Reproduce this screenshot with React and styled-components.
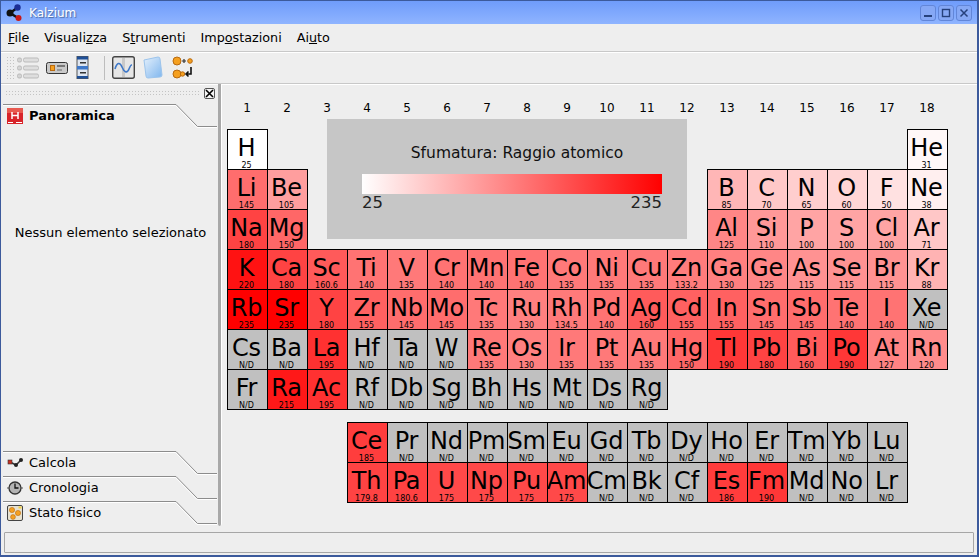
import styled, { createGlobalStyle } from 'styled-components';

const GlobalStyle = createGlobalStyle`
  html, body {
    margin: 0;
    padding: 0;
    background: #eeeeee;
  }
`;

const ND = 'N/D';
const MIN = 25;
const MAX = 235;

const cellColor = (value) => {
  if (value === ND) return '#c0c0c0';
  const c = Math.round((255 * (MAX - parseFloat(value))) / (MAX - MIN));
  return `rgb(255, ${c}, ${c})`;
};

// [symbol, value, column, row]
const row = (r, start, list) =>
  list.map(([s, v], i) => [s, v, start + i, r]);

const elements = [
  ...row(1, 1, [['H', '25']]),
  ...row(1, 18, [['He', '31']]),
  ...row(2, 1, [['Li', '145'], ['Be', '105']]),
  ...row(2, 13, [['B', '85'], ['C', '70'], ['N', '65'], ['O', '60'], ['F', '50'], ['Ne', '38']]),
  ...row(3, 1, [['Na', '180'], ['Mg', '150']]),
  ...row(3, 13, [['Al', '125'], ['Si', '110'], ['P', '100'], ['S', '100'], ['Cl', '100'], ['Ar', '71']]),
  ...row(4, 1, [['K', '220'], ['Ca', '180'], ['Sc', '160.6'], ['Ti', '140'], ['V', '135'], ['Cr', '140'], ['Mn', '140'], ['Fe', '140'], ['Co', '135'], ['Ni', '135'], ['Cu', '135'], ['Zn', '133.2'], ['Ga', '130'], ['Ge', '125'], ['As', '115'], ['Se', '115'], ['Br', '115'], ['Kr', '88']]),
  ...row(5, 1, [['Rb', '235'], ['Sr', '235'], ['Y', '180'], ['Zr', '155'], ['Nb', '145'], ['Mo', '145'], ['Tc', '135'], ['Ru', '130'], ['Rh', '134.5'], ['Pd', '140'], ['Ag', '160'], ['Cd', '155'], ['In', '155'], ['Sn', '145'], ['Sb', '145'], ['Te', '140'], ['I', '140'], ['Xe', ND]]),
  ...row(6, 1, [['Cs', ND], ['Ba', ND], ['La', '195'], ['Hf', ND], ['Ta', ND], ['W', ND], ['Re', '135'], ['Os', '130'], ['Ir', '135'], ['Pt', '135'], ['Au', '135'], ['Hg', '150'], ['Tl', '190'], ['Pb', '180'], ['Bi', '160'], ['Po', '190'], ['At', '127'], ['Rn', '120']]),
  ...row(7, 1, [['Fr', ND], ['Ra', '215'], ['Ac', '195'], ['Rf', ND], ['Db', ND], ['Sg', ND], ['Bh', ND], ['Hs', ND], ['Mt', ND], ['Ds', ND], ['Rg', ND]]),
];

const lanthanides = [
  ...row(1, 1, [['Ce', '185'], ['Pr', ND], ['Nd', ND], ['Pm', ND], ['Sm', ND], ['Eu', ND], ['Gd', ND], ['Tb', ND], ['Dy', ND], ['Ho', ND], ['Er', ND], ['Tm', ND], ['Yb', ND], ['Lu', ND]]),
  ...row(2, 1, [['Th', '179.8'], ['Pa', '180.6'], ['U', '175'], ['Np', '175'], ['Pu', '175'], ['Am', '175'], ['Cm', ND], ['Bk', ND], ['Cf', ND], ['Es', '186'], ['Fm', '190'], ['Md', ND], ['No', ND], ['Lr', ND]]),
];

const Window = styled.div`
  width: 979px;
  height: 557px;
  box-sizing: border-box;
  display: flex;
  flex-direction: column;
  background: #eeeeee;
  border-left: 1px solid #3c5a9c;
  border-right: 2px solid #3c5a9c;
  border-bottom: 2px solid #3c5a9c;
  font-family: "DejaVu Sans", sans-serif;
  color: #000;
  overflow: hidden;
`;

const TitleBar = styled.div`
  height: 24px;
  flex: none;
  display: flex;
  align-items: center;
  padding: 0 7px 0 6px;
  margin: 0 -2px 0 -1px;
  background: linear-gradient(#6f9cfb, #8fb4ff);
  border-top: 1px solid #3c5a9c;
  box-sizing: border-box;
`;

const TitleText = styled.span`
  margin-left: 7px;
  flex: 1;
  font-size: 12px;
  color: #fff;
  text-shadow: 1px 1px 1px #47689f;
`;

const WinButton = styled.div`
  width: 16px;
  height: 16px;
  box-sizing: border-box;
  margin-left: 2px;
  border: 1px solid #6286d8;
  border-radius: 3px;
  background: #86a8f5;
  display: flex;
  align-items: center;
  justify-content: center;
`;

const MenuBar = styled.div`
  height: 28px;
  flex: none;
  box-sizing: border-box;
  display: flex;
  align-items: center;
  gap: 15px;
  padding-left: 7px;
  font-size: 12.75px;
  border-bottom: 1px solid #c8c8c8;
  box-shadow: 0 1px 0 #fff;
  u {
    text-underline-offset: 1px;
  }
`;

const ToolBar = styled.div`
  height: 32px;
  flex: none;
  display: flex;
  align-items: center;
  padding-left: 5px;
  border-bottom: 1px solid #c8c8c8;
  box-sizing: border-box;
  box-shadow: 0 1px 0 #fff;
`;

const Grip = styled.div`
  flex: none;
  background-image: radial-gradient(circle, #c4c4c4 0.8px, transparent 1px);
  background-size: 3px 3px;
`;

const ToolGrip = styled(Grip)`
  width: 8px;
  height: 24px;
  margin-right: 2px;
`;

const ToolIcon = styled.svg`
  flex: none;
  display: block;
  margin-right: ${(p) => p.$gap ?? 8}px;
`;

const ToolSep = styled.div`
  flex: none;
  width: 1px;
  height: 24px;
  background: #bdbdbd;
  margin: 0 7px 0 2px;
`;

const Main = styled.div`
  flex: 1;
  display: flex;
  min-height: 0;
`;

const Sidebar = styled.div`
  width: 217px;
  flex: none;
  display: flex;
  flex-direction: column;
  height: 442px;
  padding-left: 2px;
  box-sizing: border-box;
`;

const DockHead = styled.div`
  height: 20px;
  flex: none;
  display: flex;
  align-items: center;
  padding: 0 3px 2px 2px;
  box-sizing: border-box;
  gap: 3px;
`;

const DockGrip = styled(Grip)`
  flex: 1;
  height: 6px;
`;

const CloseBox = styled.div`
  width: 11px;
  height: 11px;
  box-sizing: border-box;
  border: 1px solid #555;
  border-radius: 2px;
  background: #f4f4f4;
  display: flex;
  align-items: center;
  justify-content: center;
`;

const Tab = styled.div`
  position: relative;
  height: 25px;
  flex: none;
  display: flex;
  align-items: center;
  gap: 6px;
  padding: 0 0 2px 4px;
  font-size: 13px;
  font-weight: ${(p) => (p.$active ? 700 : 400)};
  box-sizing: border-box;
`;

const TabEdge = styled.svg`
  position: absolute;
  left: 0;
  top: 0;
  pointer-events: none;
`;

const Pane = styled.div`
  flex: 1;
  display: flex;
  align-items: flex-start;
  justify-content: center;
  font-size: 13px;
  line-height: 16px;
  padding-top: 96px;
  box-sizing: border-box;
`;

const Splitter = styled.div`
  width: 3px;
  flex: none;
  height: 442px;
  background: #a8a8a8;
  border-right: 1px solid #fff;
  border-radius: 0 0 2px 2px;
`;

const Content = styled.div`
  flex: 1;
  padding: 15px 0 0 5px;
`;

const Table = styled.div`
  display: grid;
  grid-template-columns: repeat(18, 40px);
  grid-template-rows: 20px 10px repeat(7, 40px);
`;

const GroupNumber = styled.div`
  grid-row: 1;
  grid-column: ${(p) => p.$col};
  display: flex;
  align-items: center;
  justify-content: center;
  font-size: 12px;
  padding-bottom: 2px;
`;

const Cell = styled.div`
  width: 41px;
  height: 41px;
  box-sizing: border-box;
  border: 1px solid #000;
  padding-right: 2px;
  display: flex;
  flex-direction: column;
  align-items: center;
  overflow: hidden;
  background: ${(p) => cellColor(p.$value)};
  grid-column: ${(p) => p.$col};
  grid-row: ${(p) => p.$row};
`;

const Symbol = styled.div`
  font-size: 24px;
  line-height: 26px;
  margin-top: 5px;
  height: 26px;
  letter-spacing: -0.2px;
  white-space: nowrap;
`;

const Value = styled.div`
  font-size: 8px;
  line-height: 9px;
`;

const Legend = styled.div`
  grid-column: 3 / 13;
  grid-row: 2 / 6;
  z-index: 1;
  margin: 0 20px;
  height: 120px;
  background: #c6c6c6;
  box-sizing: border-box;
  padding: 26px 0 0 35px;
  display: flex;
  flex-direction: column;
`;

const LegendTitle = styled.div`
  width: 310px;
  font-size: 15.5px;
  line-height: 16px;
  text-align: center;
  margin-bottom: 13px;
  color: #111;
  white-space: nowrap;
`;

const LegendBar = styled.div`
  width: 300px;
  height: 20px;
  background: linear-gradient(to right, #fff, #f00);
`;

const LegendScale = styled.div`
  width: 300px;
  display: flex;
  justify-content: space-between;
  font-size: 16.5px;
  line-height: 18px;
  color: #222;
`;

const InnerTable = styled.div`
  display: grid;
  grid-template-columns: repeat(14, 40px);
  grid-template-rows: repeat(2, 40px);
  margin: 13px 0 0 120px;
`;

const StatusBar = styled.div`
  height: 21px;
  flex: none;
  margin: auto 0 2px 3px;
  width: 970px;
  border: 1px solid #a6a6a6;
  box-sizing: border-box;
  border-radius: 1px;
`;

const TabOutline = () => (
  <TabEdge width="215" height="25" viewBox="0 0 215 25">
    <polyline points="0,0.5 173,0.5 194.5,22.5 214,22.5" fill="none" stroke="#8c8c8c" strokeWidth="1" />
    <polyline points="0,1.5 172.5,1.5 194,23.5 214,23.5" fill="none" stroke="#fff" strokeWidth="1" />
  </TabEdge>
);

const KalziumLogo = () => (
  <svg width="16" height="17" viewBox="0 0 16 17">
    <path d="M4 9 L11 4 M4 9 L12 14" stroke="#111" strokeWidth="2.4" />
    <circle cx="4" cy="9" r="3.5" fill="#111" />
    <circle cx="11.5" cy="3.5" r="3.2" fill="#1c2e96" />
    <circle cx="12.5" cy="14" r="3" fill="#c81818" />
  </svg>
);

const ListIcon = () => (
  <ToolIcon width="23" height="24" viewBox="0 0 23 24" $gap={7}>
    {[2, 10, 18].map((y) => (
      <g key={y}>
        <rect x="1.5" y={y} width="4" height="4" rx="1.5" fill="#d4d4d4" stroke="#bbb" />
        <rect x="7.5" y={y} width="15" height="4" rx="1.5" fill="#dedede" stroke="#bbb" />
      </g>
    ))}
  </ToolIcon>
);

const CardIcon = () => (
  <ToolIcon width="22" height="14" viewBox="0 0 22 14">
    <rect x="0.5" y="1.5" width="21" height="11" rx="2" fill="#c9c9c9" stroke="#333" />
    <rect x="4.5" y="4.5" width="4" height="5" fill="#f5a020" stroke="#b86a10" />
    <rect x="11" y="4" width="8" height="2" fill="#777" />
    <rect x="11" y="8" width="5" height="2" fill="#999" />
  </ToolIcon>
);

const StripIcon = () => (
  <ToolIcon width="14" height="23" viewBox="0 0 14 23" $gap={12}>
    <rect x="1" y="0.5" width="11" height="22" fill="#dfe6f0" stroke="#555" />
    <rect x="1" y="0.5" width="11" height="3" fill="#1f4f96" />
    <rect x="1" y="10" width="11" height="3.5" fill="#3f78c8" />
    <rect x="1" y="20" width="11" height="2.5" fill="#1f4f96" />
    <rect x="4" y="6" width="6" height="1.5" fill="#333" />
    <rect x="4" y="16" width="6" height="1.5" fill="#333" />
  </ToolIcon>
);

const WaveIcon = () => (
  <ToolIcon width="23" height="23" viewBox="0 0 23 23">
    <rect x="0.7" y="0.7" width="21.6" height="21.6" rx="2" fill="#e6e6e6" stroke="#444" strokeWidth="1.4" />
    <rect x="10" y="2" width="3" height="19" fill="#c9c9c9" />
    <path d="M3 13 C5 6 8 6 10 11 S15 18 17 13 S19 9 20 9" fill="none" stroke="#3f78c8" strokeWidth="1.6" />
  </ToolIcon>
);

const GlassIcon = () => (
  <ToolIcon width="20" height="23" viewBox="0 0 20 23" $gap={9}>
    <defs>
      <linearGradient id="glass" x1="0" y1="0" x2="1" y2="1">
        <stop offset="0" stopColor="#e4f0fc" />
        <stop offset="1" stopColor="#7fb6ee" />
      </linearGradient>
    </defs>
    <path d="M1 4 L15 1 Q17 1 17 3 L19 19 Q19 21 17 21 L5 22 Q3 22 3 20 Z" fill="url(#glass)" stroke="#9cc4ec" />
  </ToolIcon>
);

const ReactionIcon = () => (
  <ToolIcon width="23" height="23" viewBox="0 0 23 23">
    <circle cx="5" cy="5" r="4" fill="#f5a020" stroke="#b86a10" />
    <path d="M10 5 H14 M12 3 V7" stroke="#333" strokeWidth="1.2" />
    <circle cx="18" cy="5" r="2.3" fill="#f5a020" stroke="#b86a10" />
    <circle cx="5" cy="18" r="4" fill="#f5a020" stroke="#b86a10" />
    <circle cx="10.5" cy="18" r="2.2" fill="#f5a020" stroke="#b86a10" />
    <path d="M19 11 V18 H14 M16.5 15.5 L14 18 L16.5 20.5" fill="none" stroke="#111" strokeWidth="1.6" />
  </ToolIcon>
);

const ElementIcon = () => (
  <svg width="16" height="16" viewBox="0 0 16 16">
    <rect width="16" height="16" fill="#d8242a" />
    <rect x="0" y="0" width="16" height="5" fill="#e85a50" />
    <path d="M5 4 V11 M11 4 V11 M5 7.5 H11" stroke="#fff" strokeWidth="1.5" />
    <path d="M1 14.5 H6 M9 14.5 H15" stroke="#fff" strokeWidth="1" />
  </svg>
);

const CalcIcon = () => (
  <svg width="16" height="16" viewBox="0 0 16 16">
    <path d="M3 7 L9 10 L14 5" fill="none" stroke="#333" strokeWidth="1.5" />
    <rect x="1" y="5" width="4" height="4" fill="#c83020" stroke="#333" strokeWidth="0.6" />
    <circle cx="9" cy="10" r="2" fill="#222" />
    <circle cx="14" cy="5" r="2" fill="#222" />
  </svg>
);

const ClockIcon = () => (
  <svg width="16" height="16" viewBox="0 0 16 16">
    <circle cx="8" cy="8" r="6" fill="#b4b4b4" stroke="#333" strokeWidth="1.3" />
    <path d="M8 3.5 V8 H11.5" fill="none" stroke="#111" strokeWidth="1.3" />
    <path d="M0 8 H2 M14 8 H16" stroke="#555" />
  </svg>
);

const PhaseIcon = () => (
  <svg width="16" height="16" viewBox="0 0 16 16">
    <rect x="0.5" y="0.5" width="15" height="15" rx="1.5" fill="#e8e2d0" stroke="#444" />
    <circle cx="5" cy="5" r="2.6" fill="#f5a020" stroke="#b86a10" strokeWidth="0.6" />
    <circle cx="11" cy="8" r="2.6" fill="#f5a020" stroke="#b86a10" strokeWidth="0.6" />
    <circle cx="6" cy="12" r="2.4" fill="#f5a020" stroke="#b86a10" strokeWidth="0.6" />
    <rect x="11.5" y="1.5" width="3" height="2" fill="#f4d040" />
  </svg>
);

const Element = ({ symbol, value, col, rowIndex }) => (
  <Cell $value={value} $col={col} $row={rowIndex}>
    <Symbol>{symbol}</Symbol>
    <Value>{value}</Value>
  </Cell>
);

const App = () => {
  return (
    <>
      <GlobalStyle />
      <Window>
        <TitleBar>
          <KalziumLogo />
          <TitleText>Kalzium</TitleText>
          <WinButton>
            <svg width="10" height="10" viewBox="0 0 10 10"><rect x="1" y="7" width="8" height="2" fill="#26417c" /></svg>
          </WinButton>
          <WinButton>
            <svg width="10" height="10" viewBox="0 0 10 10"><rect x="1.5" y="1.5" width="7" height="7" fill="none" stroke="#26417c" strokeWidth="1.4" /></svg>
          </WinButton>
          <WinButton>
            <svg width="10" height="10" viewBox="0 0 10 10"><path d="M1.5 1.5 L8.5 8.5 M8.5 1.5 L1.5 8.5" stroke="#26417c" strokeWidth="1.5" /></svg>
          </WinButton>
        </TitleBar>
        <MenuBar>
          <span><u>F</u>ile</span>
          <span>Visuali<u>z</u>za</span>
          <span>S<u>t</u>rumenti</span>
          <span>Imp<u>o</u>stazioni</span>
          <span>Ai<u>u</u>to</span>
        </MenuBar>
        <ToolBar>
          <ToolGrip />
          <ListIcon />
          <CardIcon />
          <StripIcon />
          <ToolSep />
          <WaveIcon />
          <GlassIcon />
          <ReactionIcon />
        </ToolBar>
        <Main>
          <Sidebar>
            <DockHead>
              <DockGrip />
              <CloseBox>
                <svg width="9" height="9" viewBox="0 0 9 9"><path d="M1 1 L8 8 M8 1 L1 8" stroke="#000" strokeWidth="1.6" /></svg>
              </CloseBox>
            </DockHead>
            <Tab $active>
              <TabOutline />
              <ElementIcon />
              Panoramica
            </Tab>
            <Pane>Nessun elemento selezionato</Pane>
            <Tab>
              <TabOutline />
              <CalcIcon />
              Calcola
            </Tab>
            <Tab>
              <TabOutline />
              <ClockIcon />
              Cronologia
            </Tab>
            <Tab>
              <TabOutline />
              <PhaseIcon />
              Stato fisico
            </Tab>
          </Sidebar>
          <Splitter />
          <Content>
            <Table>
              {Array.from({ length: 18 }, (_, i) => (
                <GroupNumber key={i} $col={i + 1}>{i + 1}</GroupNumber>
              ))}
              <Legend>
                <LegendTitle>Sfumatura: Raggio atomico</LegendTitle>
                <LegendBar />
                <LegendScale>
                  <span>25</span>
                  <span>235</span>
                </LegendScale>
              </Legend>
              {elements.map(([s, v, c, r]) => (
                <Element key={s} symbol={s} value={v} col={c} rowIndex={r + 2} />
              ))}
            </Table>
            <InnerTable>
              {lanthanides.map(([s, v, c, r]) => (
                <Element key={s} symbol={s} value={v} col={c} rowIndex={r} />
              ))}
            </InnerTable>
          </Content>
        </Main>
        <StatusBar />
      </Window>
    </>
  );
};

export default App;
